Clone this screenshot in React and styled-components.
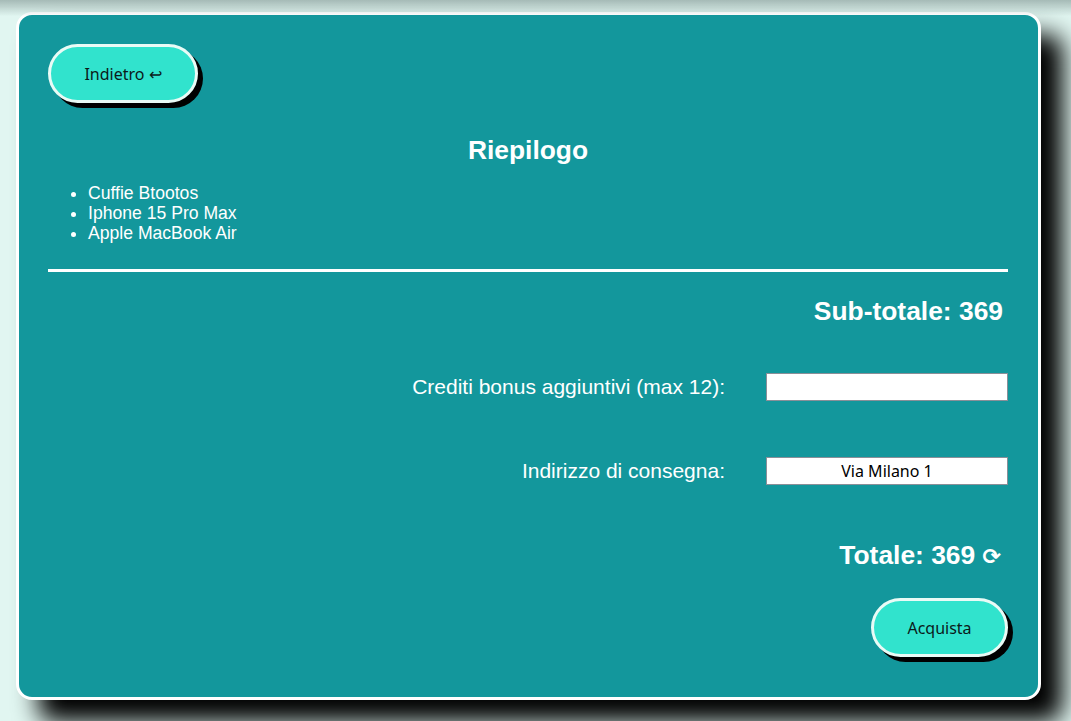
import styled, { createGlobalStyle } from "styled-components";

const Global = createGlobalStyle`
  html, body {
    margin: 0;
    background: #e1f6f1;
    font-family: "Liberation Sans", Arial, sans-serif;
  }
`;

export default function App() {
  const items = ["Cuffie Btootos", "Iphone 15 Pro Max", "Apple MacBook Air"];

  return (
    <Page>
      <Global />
      <TopShade />
      <Card>
        <Top>
          <PillButton $w={150}>Indietro ↩</PillButton>
        </Top>
        <Title>Riepilogo</Title>
        <List>
          {items.map((item) => (
            <li key={item}>{item}</li>
          ))}
        </List>
        <Rule />
        <Amount $top={24}>Sub-totale: 369</Amount>
        <Field $top={47}>
          <Label>Crediti bonus aggiuntivi (max 12):</Label>
          <Input type="text" />
        </Field>
        <Field $top={56}>
          <Label>Indirizzo di consegna:</Label>
          <Input type="text" defaultValue="Via Milano 1" />
        </Field>
        <Amount $top={55} $right={7}>
          Totale: 369 <Refresh>⟳</Refresh>
        </Amount>
        <Bottom>
          <PillButton $w={137}>Acquista</PillButton>
        </Bottom>
      </Card>
    </Page>
  );
}

const Page = styled.div`
  box-sizing: border-box;
  min-height: 100vh;
  padding: 12px 0 40px 16px;
`;
const TopShade = styled.div`
  position: fixed;
  top: 0;
  left: 0;
  right: 0;
  height: 16px;
  background: linear-gradient(rgba(40, 60, 58, 0.32), rgba(40, 60, 58, 0));
  pointer-events: none;
  z-index: 2;
`;
const Card = styled.main`
  box-sizing: border-box;
  width: 1025px;
  height: 688px;
  padding: 29px 30px 0 29px;
  background: #13979c;
  border: 3px solid #ffffff;
  border-radius: 16px;
  box-shadow: 22px 22px 24px #000;
  color: #fff;
  display: flex;
  flex-direction: column;
`;
const Top = styled.div`
  display: flex;
`;
const Bottom = styled.div`
  display: flex;
  justify-content: flex-end;
  margin-top: 26px;
`;
const PillButton = styled.button`
  box-sizing: border-box;
  width: ${({ $w }) => $w}px;
  height: 59px;
  border: 3px solid #e9fbf6;
  border-radius: 30px;
  background: #31e3cd;
  box-shadow: 5px 5px 0 #000;
  color: #0b1a1a;
  font-family: "Noto Sans", sans-serif;
  font-size: 16px;
  cursor: pointer;
`;
const Title = styled.h2`
  margin: 32px 0 0;
  text-align: center;
  font-size: 26.4px;
  line-height: 30px;
  font-weight: bold;
`;
const List = styled.ul`
  margin: 18px 0 0;
  padding-left: 40px;
  font-size: 17.6px;
  line-height: 20px;
`;
const Rule = styled.hr`
  margin: 26px 0 0;
  border: none;
  height: 3px;
  background: #fff;
`;
const Amount = styled.div`
  margin-top: ${({ $top }) => $top}px;
  padding-right: ${({ $right }) => $right ?? 5}px;
  text-align: right;
  font-size: 26.4px;
  font-weight: bold;
  line-height: 30px;
`;
const Refresh = styled.span`
  font-size: 22px;
  font-family: "DejaVu Sans", sans-serif;
`;
const Field = styled.label`
  display: flex;
  justify-content: flex-end;
  align-items: center;
  gap: 41px;
  margin-top: ${({ $top }) => $top}px;
`;
const Label = styled.span`
  font-size: 21px;
  line-height: 24px;
`;
const Input = styled.input`
  box-sizing: border-box;
  width: 242px;
  height: 28px;
  border: 1px solid #8a8f98;
  border-radius: 0;
  background: #fff;
  text-align: center;
  font-family: "Noto Sans", sans-serif;
  font-size: 16px;
  color: #000;
  outline: none;
`;
